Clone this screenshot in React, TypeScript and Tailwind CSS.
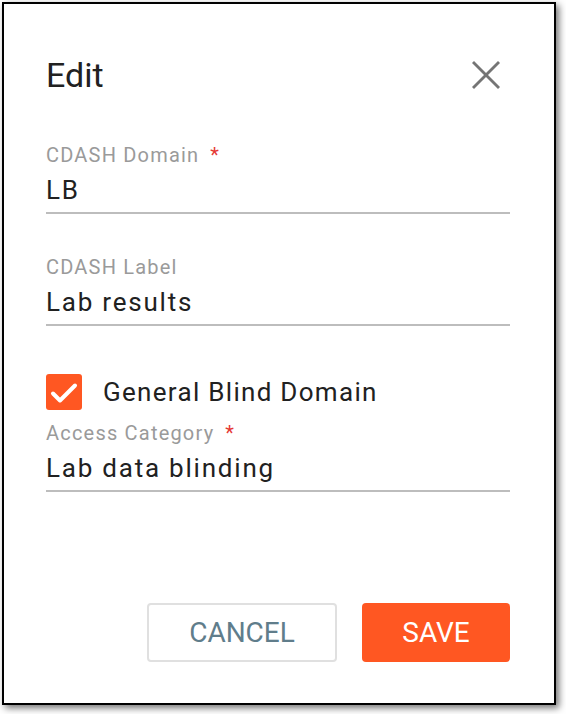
import React from "react";

function Field({ label, value, required }: { label: string; value: string; required?: boolean }) {
  return (
    <div className="flex flex-col">
      <div className="flex items-center text-[20px] leading-[24px] tracking-[1.2px] text-[#9a9a9a]">
        <span>{label}</span>
        {required && <span className="ml-[11px] text-[#e53935]">*</span>}
      </div>
      <div className="mt-[7px] pb-[6px] border-b-2 border-[#bdbdbd] text-[26px] leading-[32px] tracking-[1.78px] text-[#212121]">
        {value}
      </div>
    </div>
  );
}

export default function App() {
  return (
    <div className="min-h-screen bg-white" style={{ fontFamily: "Roboto, 'Liberation Sans', sans-serif" }}>
      <div className="ml-[2px] pt-[2px]">
        <div className="w-[554px] h-[703px] border-2 border-black bg-white shadow-[3px_3px_7px_rgba(0,0,0,0.55)] pl-[42px] pr-[44px] pt-[51px] flex flex-col">
          {/* header */}
          <div className="flex items-center justify-between h-[40px]">
            <h2 className="text-[34px] leading-[40px] text-[#212121]">Edit</h2>
            <button className="w-[48px] h-[48px] flex items-center justify-center">
              <svg width="48" height="48" viewBox="0 0 48 48">
                <line x1="11" y1="11" x2="37" y2="37" stroke="#757575" strokeWidth="2.8" />
                <line x1="37" y1="11" x2="11" y2="37" stroke="#757575" strokeWidth="2.8" />
              </svg>
            </button>
          </div>

          <div className="mt-[48px]">
            <Field label="CDASH Domain" value="LB" required />
          </div>
          <div className="mt-[41px]">
            <Field label="CDASH Label" value="Lab results" />
          </div>

          {/* checkbox */}
          <div className="mt-[48px] flex items-center h-[36px]">
            <div className="w-[36px] h-[36px] rounded-[3px] bg-[#ff5722] flex items-center justify-center">
              <svg width="36" height="36" viewBox="0 0 36 36">
                <polyline points="7,19.5 14,26.5 29,11.5" fill="none" stroke="white" strokeWidth="4" strokeLinecap="round" strokeLinejoin="round" />
              </svg>
            </div>
            <span className="ml-[21px] text-[26px] leading-[36px] tracking-[1.3px] text-[#212121]">General Blind Domain</span>
          </div>

          <div className="mt-[11px]">
            <Field label="Access Category" value="Lab data blinding" required />
          </div>

          {/* actions */}
          <div className="mt-[111px] flex justify-end gap-[25px]">
            <button className="w-[190px] h-[59px] rounded-[4px] border-2 border-[#e0e0e0] text-[28px] text-[#607d8b]">
              CANCEL
            </button>
            <button className="w-[148px] h-[59px] rounded-[4px] bg-[#ff5722] text-[28px] text-white">
              SAVE
            </button>
          </div>
        </div>
      </div>
    </div>
  );
}
